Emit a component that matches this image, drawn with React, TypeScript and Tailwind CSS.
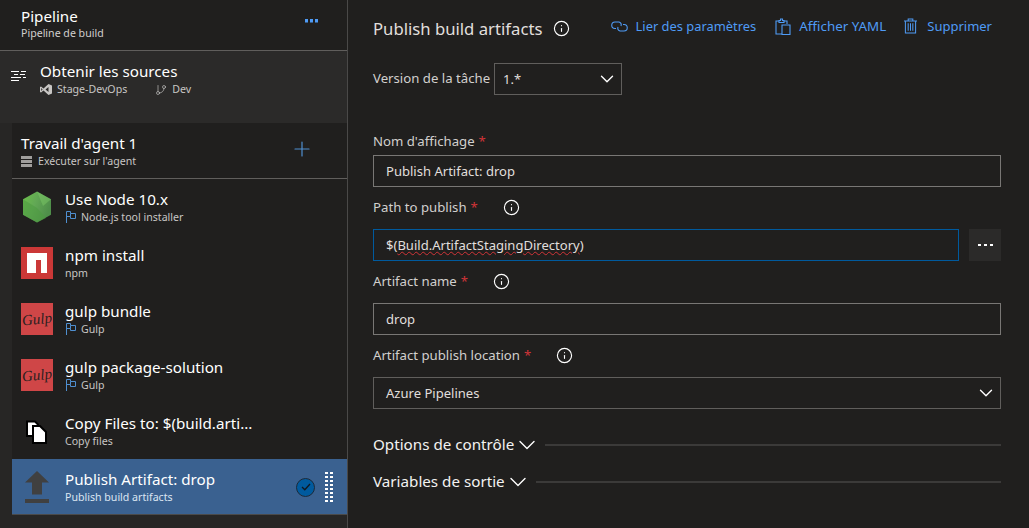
import React from 'react';
import { ChevronDown, Info, Plus, GitBranch } from 'lucide-react';

const FlagIcon = () => (
  <svg width="11" height="12" viewBox="0 0 11 12" fill="none" stroke="#4f8fd0" strokeWidth="1" className="shrink-0">
    <path d="M1.5 12V0.5H5.5V2.5H10.5V7.5H5.5V5.5H1.5" />
    <path d="M5.5 2.5V5.5" />
  </svg>
);

const NodeIcon = () => (
  <svg width="32" height="32" viewBox="0 0 32 32">
    <defs>
      <linearGradient id="nodeGrad" x1="0" y1="0" x2="1" y2="0.4">
        <stop offset="0" stopColor="#6cc04a" />
        <stop offset="0.5" stopColor="#62a855" />
        <stop offset="1" stopColor="#4f8f4a" />
      </linearGradient>
    </defs>
    <path d="M16 0.5L30 8.2V23.8L16 31.5L2 23.8V8.2Z" fill="url(#nodeGrad)" />
    <path d="M2 8.2L16 17L25 27L16 31.5L2 23.8Z" fill="#4c9a3f" opacity="0.55" />
    <path d="M16 0.5L30 8.2L22 15Z" fill="#7cc766" opacity="0.5" />
  </svg>
);

const NpmIcon = () => (
  <div className="w-8 h-8 bg-[#cb3837] flex items-center justify-center shrink-0">
    <div className="w-5 h-5 bg-white flex items-end justify-center pl-[3px]">
      <div className="w-[5px] h-[13px] bg-[#cb3837]" />
    </div>
  </div>
);

const GulpIcon = () => (
  <div className="w-8 h-8 bg-[#cf4647] flex items-center justify-center shrink-0 overflow-hidden">
    <span className="font-['Liberation_Serif',serif] italic text-[15px] leading-none text-[#2a1f1f] -rotate-6">Gulp</span>
  </div>
);

const CopyIcon = () => (
  <svg width="32" height="32" viewBox="0 0 32 32">
    <path d="M6 6.5H14L17 9.5V21H6Z" fill="#fff" stroke="#000" strokeWidth="2" />
    <path d="M12 11H19L25 17V28H12Z" fill="#fff" stroke="#000" strokeWidth="2" />
  </svg>
);

const UploadIcon = () => (
  <svg width="32" height="32" viewBox="0 0 32 32" fill="#404040">
    <path d="M16 0L28 11.5H21V23.5H11V11.5H4Z" />
    <rect x="4" y="28" width="24" height="4" />
  </svg>
);

const Gripper = () => (
  <div className="grid grid-cols-2 gap-x-[2px] gap-y-[2px] w-2 shrink-0">
    {Array.from({ length: 16 }).map((_, i) => (
      <div key={i} className="w-[3px] h-[2px] bg-white" />
    ))}
  </div>
);

interface TaskProps {
  icon: React.ReactNode;
  title: string;
  sub: string;
  flag?: boolean;
  selected?: boolean;
}

const Task = ({ icon, title, sub, flag, selected }: TaskProps) => (
  <div className={`h-14 flex items-center pl-[9px] ${selected ? 'bg-[#3a6190] border-b border-[#4a4a4a] pt-[1px]' : ''}`}>
    <div className="w-8 h-8 flex items-center justify-center shrink-0">{icon}</div>
    <div className="ml-3 flex-1 min-w-0 flex flex-col pb-[1px]">
      <span className="text-[15.2px] leading-[20px] text-white">{title}</span>
      <span className={`mt-[1px] flex items-center gap-[5px] text-[10.6px] leading-[15px] ${selected ? 'text-[#dce6f2]' : 'text-[#c8c6c4]'}`}>
        {flag && <FlagIcon />}
        {sub}
      </span>
    </div>
    {selected && (
      <div className="flex items-center gap-[10px] pr-[14px]">
        <div className="w-[19px] h-[19px] rounded-full bg-[#005a9e] border border-[#1b2a3a] flex items-center justify-center">
          <svg width="10" height="8" viewBox="0 0 10 8" fill="none" stroke="#101820" strokeWidth="1.3">
            <path d="M1 4L3.8 6.8L9 1" />
          </svg>
        </div>
        <Gripper />
      </div>
    )}
  </div>
);

const Label = ({ text, info, gap }: { text: string; info?: boolean; gap?: string }) => (
  <div className="flex items-center h-[22px] pb-[1px] text-[13.2px] text-[#d2d0ce]">
    <span>{text}</span>
    <span className="text-[#d13438] ml-[4px]">*</span>
    {info && <Info size={17} strokeWidth={1.6} className={`text-white ${gap}`} />}
  </div>
);

const Field = ({ children, focus, chevron, pad = 'pl-3' }: { children: React.ReactNode; focus?: boolean; chevron?: boolean; pad?: string }) => (
  <div className={`h-8 flex-1 flex items-center justify-between ${pad} pr-[3px] border text-[13.05px] text-[#e1dfdd] ${focus ? 'border-[#005a9e]' : chevron ? 'border-[#605e5c]' : 'border-[#797775]'}`}>
    <span className="pt-[1px]">{children}</span>
    {chevron && <ChevronDown size={22} strokeWidth={1.5} className="text-white shrink-0" />}
  </div>
);

const Action = ({ icon, text, className }: { icon: React.ReactNode; text: string; className: string }) => (
  <div className={`flex items-center text-[#4f9bf5] ${className}`}>
    {icon}
    <span>{text}</span>
  </div>
);

const Section = ({ text }: { text: string }) => (
  <div className="flex items-center h-[37px] text-[15.2px] text-[#f3f2f1]">
    <span>{text}</span>
    <ChevronDown size={28} strokeWidth={1.2} className="ml-[-1px] text-white" />
    <div className="ml-[4px] flex-1 h-[2px] bg-[#3b3a39]" />
  </div>
);

export default function App() {
  return (
    <div className="w-[1029px] h-[528px] flex overflow-hidden bg-[#201f1e] font-['Noto_Sans',sans-serif]">
      {/* Left pipeline column */}
      <div className="w-[348px] shrink-0 flex flex-col bg-[#272625] border-r border-[#4a4948]">
        <div className="h-[51px] shrink-0 flex items-start justify-between pl-[21px] pr-[28px] pt-[6px] bg-[#201f1e] border-b border-[#605e5c]">
          <div className="flex flex-col">
            <span className="text-[15.2px] leading-[20px] text-white">Pipeline</span>
            <span className="text-[10.6px] leading-[15px] text-[#d2d0ce]">Pipeline de build</span>
          </div>
          <svg width="14" height="4" viewBox="0 0 14 4" fill="#4f9bf5" className="mt-[13px]">
            <rect x="0" y="0" width="3" height="3.5" />
            <rect x="5" y="0" width="3" height="3.5" />
            <rect x="10" y="0" width="3" height="3.5" />
          </svg>
        </div>

        <div className="h-[72px] shrink-0 flex bg-[#2b2a29] pl-[11px] pt-[10px]">
          <svg width="15" height="13" viewBox="0 0 15 13" stroke="#fff" strokeWidth="1" className="mt-[9px] shrink-0">
            <path d="M0 1.5H8M10 1.5H15M3 4.5H7M9 4.5H14M0 7.5H10M12 7.5H15M0 10.5H8" />
          </svg>
          <div className="ml-[14px] flex flex-col">
            <span className="text-[15.2px] leading-[20px] text-white">Obtenir les sources</span>
            <div className="mt-[1px] flex items-center text-[10.6px] leading-[15px] text-[#c8c6c4]">
              <svg width="12" height="11" viewBox="0 0 12 11" fill="#c8c6c4" className="mr-[5px]">
                <path d="M8.5 0L12 1.4V9.6L8.5 11L3.5 6.6L1 8.5L0 8V3L1 2.5L3.5 4.4ZM8.5 3L5.5 5.5L8.5 8ZM1.2 4V7L2.6 5.5Z" />
              </svg>
              <span>Stage-DevOps</span>
              <GitBranch size={12} strokeWidth={1.3} className="ml-[28px] mr-[5px]" />
              <span>Dev</span>
            </div>
          </div>
        </div>

        <div className="ml-3 flex-1 flex flex-col mb-[12px]">
          <div className="h-[56px] shrink-0 flex items-center justify-between pl-[9px] pr-[33px] bg-[#201f1e] border-b border-[#605e5c]">
            <div className="flex flex-col">
              <span className="text-[15.2px] leading-[20px] text-white">Travail d'agent 1</span>
              <span className="mt-[1px] flex items-center gap-[6px] text-[10.6px] leading-[15px] text-[#c8c6c4]">
                <svg width="11" height="11" viewBox="0 0 11 11" fill="#a19f9d">
                  <path d="M0 0H11V3H0ZM0 4H11V7H0ZM0 8H11V11H0Z" />
                </svg>
                Exécuter sur l'agent
              </span>
            </div>
            <Plus size={24} strokeWidth={1.2} className="text-[#4f8fd0] mt-[-4px]" />
          </div>
          <div className="bg-[#201f1e] flex flex-col">
            <Task icon={<NodeIcon />} title="Use Node 10.x" sub="Node.js tool installer" flag />
            <Task icon={<NpmIcon />} title="npm install" sub="npm" />
            <Task icon={<GulpIcon />} title="gulp bundle" sub="Gulp" flag />
            <Task icon={<GulpIcon />} title="gulp package-solution" sub="Gulp" flag />
            <Task icon={<CopyIcon />} title="Copy Files to: $(build.arti..." sub="Copy files" />
            <Task icon={<UploadIcon />} title="Publish Artifact: drop" sub="Publish build artifacts" selected />
          </div>
        </div>
      </div>

      {/* Right task form */}
      <div className="flex-1 flex flex-col pl-[25px] pr-[28px]">
        <div className="h-[58px] shrink-0 flex items-center justify-between">
          <div className="flex items-center">
            <span className="text-[16.7px] text-[#e1dfdd]">Publish build artifacts</span>
            <Info size={17} strokeWidth={1.6} className="ml-[11px] text-white" />
          </div>
          <div className="flex items-center pr-[9px] pb-[5px]">
            <Action
              text="Lier des paramètres"
              className="gap-[8px] text-[12.9px]"
              icon={
                <svg width="17" height="13" viewBox="0 0 17 13" fill="none" stroke="#4f9bf5" strokeWidth="1.1">
                  <path d="M5 8.5H4A3.2 3.2 0 0 1 4 2H8A3.2 3.2 0 0 1 10 6" />
                  <path d="M12 4.5H13A3.2 3.2 0 0 1 13 11H9A3.2 3.2 0 0 1 7 7" />
                </svg>
              }
            />
            <Action
              text="Afficher YAML"
              className="ml-[19px] gap-[8px] text-[13.4px]"
              icon={
                <svg width="16" height="17" viewBox="0 0 16 17" fill="none" stroke="#4f9bf5" strokeWidth="1.1">
                  <path d="M7 16H1V3H4M9 3H12V6" />
                  <path d="M4 4.5V2.5H5.5V1H7.5V2.5H9V4.5Z" />
                  <path d="M7 7H15V16.5H7Z" />
                </svg>
              }
            />
            <Action
              text="Supprimer"
              className="ml-[18px] gap-[10px] text-[13px]"
              icon={
                <svg width="13" height="16" viewBox="0 0 14 16" fill="none" stroke="#4f9bf5" strokeWidth="1.1">
                  <path d="M0 2.5H14M4.5 2.5V0.5H9.5V2.5M1.5 2.5V15.5H12.5V2.5" />
                  <path d="M4.5 5V13M7 5V13M9.5 5V13" />
                </svg>
              }
            />
          </div>
        </div>

        <div className="flex items-center mt-[5px]">
          <span className="w-[121px] pb-[1px] text-[13.2px] text-[#d2d0ce]">Version de la tâche</span>
          <div className="w-[128px] flex">
            <Field chevron pad="pl-[8px]">1.*</Field>
          </div>
        </div>

        <div className="mt-[36px]"><Label text="Nom d'affichage" /></div>
        <div className="flex mt-[2px]"><Field>Publish Artifact: drop</Field></div>

        <div className="mt-[10px]"><Label text="Path to publish" info gap="ml-[25px]" /></div>
        <div className="flex mt-[10px] gap-[10px]">
          <Field focus>
            ${'('}
            <span className="underline decoration-wavy decoration-[#d13438] decoration-1">Build.ArtifactStagingDirectory</span>)
          </Field>
          <div className="w-8 h-8 bg-[#2b2a29] flex items-center justify-center gap-[3px]">
            <div className="w-[3px] h-[2px] bg-white" />
            <div className="w-[3px] h-[2px] bg-white" />
            <div className="w-[3px] h-[2px] bg-white" />
          </div>
        </div>

        <div className="mt-[10px]"><Label text="Artifact name" info gap="ml-[25px]" /></div>
        <div className="flex mt-[10px]"><Field>drop</Field></div>

        <div className="mt-[10px]"><Label text="Artifact publish location" info gap="ml-[25px]" /></div>
        <div className="flex mt-[10px]"><Field chevron>Azure Pipelines</Field></div>

        <div className="mt-[17px]"><Section text="Options de contrôle" /></div>
        <Section text="Variables de sortie" />
      </div>
    </div>
  );
}
